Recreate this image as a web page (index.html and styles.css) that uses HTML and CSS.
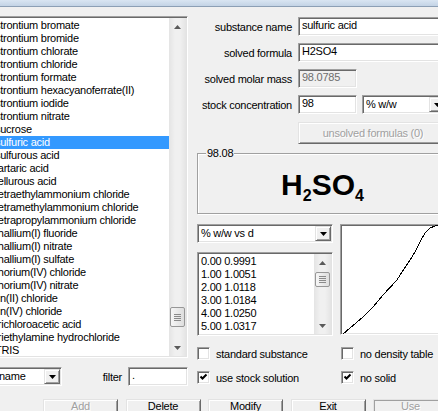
FILE: index.html
```html
<!DOCTYPE html>
<html>
<head>
    <title>Substances</title>
    <link rel="stylesheet" href="styles.css">
</head>
<body>
<div class="window">
    <div class="titlebar"></div>

    <div class="main">
        <!-- substance list -->
        <div class="left">
            <div class="listbox sunken">
                <ul class="items">
                    <li>strontium bromate</li>
                    <li>strontium bromide</li>
                    <li>strontium chlorate</li>
                    <li>strontium chloride</li>
                    <li>strontium formate</li>
                    <li>strontium hexacyanoferrate(II)</li>
                    <li>strontium iodide</li>
                    <li>strontium nitrate</li>
                    <li>sucrose</li>
                    <li class="sel">sulfuric acid</li>
                    <li>sulfurous acid</li>
                    <li>tartaric acid</li>
                    <li>tellurous acid</li>
                    <li>tetraethylammonium chloride</li>
                    <li>tetramethylammonium chloride</li>
                    <li>tetrapropylammonium chloride</li>
                    <li>thallium(I) fluoride</li>
                    <li>thallium(I) nitrate</li>
                    <li>thallium(I) sulfate</li>
                    <li>thorium(IV) chloride</li>
                    <li>thorium(IV) nitrate</li>
                    <li>tin(II) chloride</li>
                    <li>tin(IV) chloride</li>
                    <li>trichloroacetic acid</li>
                    <li>triethylamine hydrochloride</li>
                    <li>TRIS</li>
                </ul>
                <div class="vscroll">
                    <div class="sb-btn"><svg width="7" height="4"><path d="M0 4 L3.5 0 L7 4 Z" fill="#5a5a5a"/></svg></div>
                    <div class="track">
                        <div class="thumb main-thumb">
                            <svg width="7" height="7"><path d="M0 0.5 H7 M0 2.5 H7 M0 4.5 H7 M0 6.5 H7" stroke="#8a8a8a"/></svg>
                        </div>
                    </div>
                    <div class="sb-btn"><svg width="7" height="4"><path d="M0 0 L3.5 4 L7 0 Z" fill="#5a5a5a"/></svg></div>
                </div>
            </div>

            <div class="filter-row">
                <div class="combo sunken name-combo">
                    <span class="combo-text">name</span>
                    <span class="drop raised"><svg width="7" height="4"><path d="M0 0 L3.5 4 L7 0 Z" fill="#000"/></svg></span>
                </div>
                <span class="filter-label">filter</span>
                <div class="field sunken filter-field">.</div>
            </div>
        </div>

        <!-- details -->
        <div class="right">
            <div class="form">
                <label>substance name</label>
                <div class="field sunken wide">sulfuric acid</div>
                <label>solved formula</label>
                <div class="field sunken wide">H2SO4</div>
                <label>solved molar mass</label>
                <div class="field sunken short disabled">98.0785</div>
                <label>stock concentration</label>
                <div class="pair">
                    <div class="field sunken short">98</div>
                    <div class="combo sunken unit-combo">
                        <span class="combo-text">% w/w</span>
                        <span class="drop raised"><svg width="7" height="4"><path d="M0 0 L3.5 4 L7 0 Z" fill="#000"/></svg></span>
                    </div>
                </div>
            </div>

            <div class="btn raised off unsolved">unsolved formulas (0)</div>

            <div class="group">
                <span class="group-title">98.08</span>
                <div class="formula">H<sub>2</sub>SO<sub>4</sub></div>
            </div>

            <div class="density">
                <div class="density-left">
                    <div class="combo sunken">
                        <span class="combo-text">% w/w vs d</span>
                        <span class="drop raised"><svg width="7" height="4"><path d="M0 0 L3.5 4 L7 0 Z" fill="#000"/></svg></span>
                    </div>
                    <div class="listbox sunken small-list">
                        <ul class="items">
                            <li>0.00 0.9991</li>
                            <li>1.00 1.0051</li>
                            <li>2.00 1.0118</li>
                            <li>3.00 1.0184</li>
                            <li>4.00 1.0250</li>
                            <li>5.00 1.0317</li>
                        </ul>
                        <div class="vscroll">
                            <div class="sb-btn"><svg width="7" height="4"><path d="M0 4 L3.5 0 L7 4 Z" fill="#5a5a5a"/></svg></div>
                            <div class="track">
                                <div class="thumb small-thumb">
                                    <svg width="7" height="7"><path d="M0 0.5 H7 M0 2.5 H7 M0 4.5 H7 M0 6.5 H7" stroke="#8a8a8a"/></svg>
                                </div>
                            </div>
                            <div class="sb-btn"><svg width="7" height="4"><path d="M0 0 L3.5 4 L7 0 Z" fill="#5a5a5a"/></svg></div>
                        </div>
                    </div>
                </div>
                <div class="graph sunken">
                    <svg width="106" height="109" shape-rendering="crispEdges">
                        <polyline fill="none" stroke="#000" stroke-width="1"
                            points="2,109 9,103 22,92 32,82 42,70 56,55 61,47 69,35 74,27 79,17 84,8 89,3 94,1 99,0 105,1"/>
                    </svg>
                </div>
            </div>

            <div class="checks">
                <div class="check"><span class="box sunken"></span>standard substance</div>
                <div class="check"><span class="box sunken"></span>no density table</div>
                <div class="check"><span class="box sunken"><svg width="9" height="9"><path d="M1.5 3.5 L3.5 5.5 L7.5 1.5" fill="none" stroke="#000" stroke-width="2"/></svg></span>use stock solution</div>
                <div class="check"><span class="box sunken"><svg width="9" height="9"><path d="M1.5 3.5 L3.5 5.5 L7.5 1.5" fill="none" stroke="#000" stroke-width="2"/></svg></span>no solid</div>
            </div>
        </div>
    </div>

    <div class="buttons">
        <div class="btn raised off">Add</div>
        <div class="btn raised">Delete</div>
        <div class="btn raised">Modify</div>
        <div class="btn raised">Exit</div>
        <div class="btn raised off default">Use</div>
    </div>
</div>
</body>
</html>
```

FILE: styles.css
```css
html, body {
    margin: 0;
    overflow: hidden;
}
body {
    width: 438px;
    height: 411px;
    background: #f0f0f0;
    font-family: "Liberation Sans", Arial, sans-serif;
    font-size: 11px;
    letter-spacing: -0.25px;
    color: #000;
}
.window {
    margin-left: -9px;
    width: 470px;
}
.titlebar {
    height: 6px;
    background: linear-gradient(#d9e5f2, #c3d3e5);
    border-bottom: 1px solid #8c9fb5;
}

/* classic 3d borders */
.sunken {
    box-sizing: border-box;
    background: #fff;
    border: 1px solid;
    border-color: #a0a0a0 #fff #fff #a0a0a0;
    box-shadow: inset 1px 1px 0 #696969, inset -1px -1px 0 #e3e3e3;
}
.raised {
    box-sizing: border-box;
    background: #f0f0f0;
    border: 1px solid;
    border-color: #e3e3e3 #696969 #696969 #e3e3e3;
    box-shadow: inset 1px 1px 0 #fff, inset -1px -1px 0 #a0a0a0;
}

.main {
    display: flex;
    gap: 9px;
    margin-top: 9px;
}
.left {
    width: 197px;
}
.right {
    width: 251px;
    padding-top: 1px;
}

/* list boxes */
.listbox {
    display: flex;
    height: 342px;
    padding: 1px;
    overflow: hidden;
}
.items {
    flex: 1;
    list-style: none;
    margin: 0;
    padding: 1px 0 0;
    overflow: hidden;
}
.items li {
    height: 13px;
    line-height: 13px;
    padding-left: 2px;
    white-space: nowrap;
}
.items li.sel {
    background: #3399ff;
    color: #fff;
}
.vscroll {
    width: 17px;
    display: flex;
    flex-direction: column;
    background: linear-gradient(to right, #e4e4e4, #f0f0f0 35%, #f0f0f0 65%, #e4e4e4);
}
.sb-btn {
    height: 17px;
    display: flex;
    align-items: center;
    justify-content: center;
}
.track {
    flex: 1;
}
.thumb {
    margin: 0 1px;
    border: 1px solid #979797;
    border-radius: 2px;
    background: linear-gradient(to right, #f6f6f6, #dedede);
    display: flex;
    align-items: center;
    justify-content: center;
}
.thumb svg {
    display: block;
}
.main-thumb {
    margin-top: 272px;
    height: 18px;
}
.small-list {
    height: 84px;
    margin-top: 9px;
}
.small-thumb {
    margin-top: 1px;
    height: 13px;
}

/* fields */
.field {
    height: 19px;
    line-height: 15px;
    padding: 0 3px;
    white-space: nowrap;
    overflow: hidden;
}
.field.disabled {
    background: #f0f0f0;
    color: #6d6d6d;
}
.combo {
    display: flex;
    height: 19px;
    padding: 1px;
}
.combo-text {
    flex: 1;
    line-height: 15px;
    padding-left: 2px;
    white-space: nowrap;
}
.drop {
    width: 16px;
    display: flex;
    align-items: center;
    justify-content: center;
}
.drop svg {
    display: block;
}

.filter-row {
    display: flex;
    align-items: center;
    margin-top: 9px;
}
.name-combo {
    width: 67px;
    margin-left: 4px;
}
.filter-label {
    margin-left: auto;
    margin-right: 6px;
}
.filter-field {
    width: 60px;
}

.form {
    display: grid;
    grid-template-columns: 95px auto;
    column-gap: 6px;
    row-gap: 7px;
    align-items: center;
}
.form label {
    text-align: right;
    white-space: nowrap;
}
.wide {
    width: 150px;
}
.short {
    width: 59px;
}
.pair {
    display: flex;
    gap: 5px;
}
.unit-combo {
    width: 85px;
}

/* buttons */
.btn {
    width: 75px;
    height: 23px;
    line-height: 13px;
    text-align: center;
    white-space: nowrap;
}
.btn.off {
    color: #a0a0a0;
    text-shadow: 1px 1px 0 #fff;
}
.btn.default {
    outline: 1px solid #a0a0a0;
    outline-offset: -2px;
}
.unsolved {
    width: 150px;
    height: 22px;
    line-height: 20px;
    margin: 8px 0 0 101px;
}
.buttons {
    display: flex;
    gap: 7.5px;
    margin: 13px 0 0 52px;
}

/* formula frame */
.group {
    box-sizing: border-box;
    height: 61px;
    margin-top: 9px;
    border: 1px solid #a0a0a0;
    box-shadow: inset 1px 1px 0 #fff, 1px 1px 0 #fff;
}
.group-title {
    display: block;
    width: fit-content;
    margin: -7px 0 0 8px;
    padding: 0 1px;
    line-height: 13px;
    background: #f0f0f0;
}
.formula {
    margin-top: 7px;
    text-align: center;
    font-size: 30px;
    font-weight: bold;
    line-height: 36px;
    letter-spacing: 0;
}
.formula sub {
    font-size: 16px;
    line-height: 0;
    vertical-align: -6px;
}

/* density table and plot */
.density {
    display: flex;
    gap: 7px;
    margin-top: 10px;
}
.density-left {
    width: 136px;
}
.graph {
    width: 108px;
    height: 111px;
    overflow: hidden;
}
.graph svg {
    display: block;
}

.checks {
    display: grid;
    grid-template-columns: 144px auto;
    row-gap: 11px;
    margin-top: 11px;
}
.check {
    display: flex;
    align-items: center;
    gap: 6px;
    height: 13px;
    white-space: nowrap;
}
.box {
    width: 13px;
    height: 13px;
    padding: 1px;
    display: flex;
    align-items: center;
    justify-content: center;
}
.box svg {
    display: block;
}
```
